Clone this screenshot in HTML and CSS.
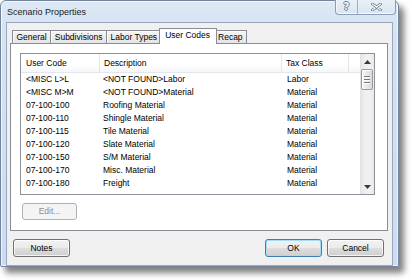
FILE: index.html
```html
<!DOCTYPE html>
<html lang="en">
<head>
<meta charset="utf-8">
<title>Scenario Properties</title>
<link rel="stylesheet" href="styles.css">
</head>
<body>
<div class="window">
  <div class="titlebar">
    <span class="title">Scenario Properties</span>
    <div class="caption-buttons">
      <div class="cap-btn help"><span class="help-glyph">?</span></div>
      <div class="cap-btn close">
        <svg width="11" height="8" viewBox="0 0 11 8">
          <path d="M1.5 1 L9.5 7 M9.5 1 L1.5 7" stroke="#6d7c90" stroke-width="2.8" stroke-linecap="round" fill="none"/>
          <path d="M1.5 1 L9.5 7 M9.5 1 L1.5 7" stroke="#f7f9fc" stroke-width="1.2" stroke-linecap="round" fill="none"/>
        </svg>
      </div>
    </div>
  </div>
  <div class="client">
    <div class="tabs-area">
      <div class="tabstrip">
        <div class="tab">General</div>
        <div class="tab">Subdivisions</div>
        <div class="tab">Labor Types</div>
        <div class="tab active">User Codes</div>
        <div class="tab">Recap</div>
      </div>
      <div class="panel">
        <div class="listview">
          <div class="lv-main">
            <div class="lv-header">
              <div class="hcell c1">User Code</div>
              <div class="hcell c2">Description</div>
              <div class="hcell c3">Tax Class</div>
              <div class="hcell c4"></div>
            </div>
            <div class="lv-rows">
              <div class="row"><span class="c1">&lt;MISC L&gt;L</span><span class="c2">&lt;NOT FOUND&gt;Labor</span><span class="c3">Labor</span></div>
              <div class="row"><span class="c1">&lt;MISC M&gt;M</span><span class="c2">&lt;NOT FOUND&gt;Material</span><span class="c3">Material</span></div>
              <div class="row"><span class="c1">07-100-100</span><span class="c2">Roofing Material</span><span class="c3">Material</span></div>
              <div class="row"><span class="c1">07-100-110</span><span class="c2">Shingle Material</span><span class="c3">Material</span></div>
              <div class="row"><span class="c1">07-100-115</span><span class="c2">Tile Material</span><span class="c3">Material</span></div>
              <div class="row"><span class="c1">07-100-120</span><span class="c2">Slate Material</span><span class="c3">Material</span></div>
              <div class="row"><span class="c1">07-100-150</span><span class="c2">S/M Material</span><span class="c3">Material</span></div>
              <div class="row"><span class="c1">07-100-170</span><span class="c2">Misc. Material</span><span class="c3">Material</span></div>
              <div class="row"><span class="c1">07-100-180</span><span class="c2">Freight</span><span class="c3">Material</span></div>
            </div>
          </div>
          <div class="vscroll">
            <div class="sb-arrow">
              <svg width="7" height="4" viewBox="0 0 7 4"><path d="M0 4 L3.5 0 L7 4 Z" fill="#3a3a3a"/></svg>
            </div>
            <div class="sb-thumb"><i></i><i></i><i></i></div>
            <div class="sb-track"></div>
            <div class="sb-arrow">
              <svg width="7" height="4" viewBox="0 0 7 4"><path d="M0 0 L7 0 L3.5 4 Z" fill="#3a3a3a"/></svg>
            </div>
          </div>
        </div>
        <button class="btn edit" disabled>Edit...</button>
      </div>
    </div>
    <div class="footer">
      <button class="btn">Notes</button>
      <div class="spacer"></div>
      <button class="btn default">OK</button>
      <button class="btn">Cancel</button>
    </div>
  </div>
</div>
</body>
</html>
```

FILE: styles.css
```css
* { box-sizing: border-box; }

html, body {
  margin: 0;
  padding: 0;
}

body {
  width: 412px;
  height: 280px;
  overflow: hidden;
  background: #ffffff;
  font-family: "Liberation Sans", Arial, sans-serif;
  font-size: 8.5px;
  color: #000;
}

/* ---------- window frame ---------- */
.window {
  width: 399px;
  height: 267px;
  border: 1px solid #74859b;
  border-radius: 6px 6px 2px 2px;
  background: linear-gradient(180deg, #dfe9f5 0, #d6e4f3 20px, #c9dcf1 100%);
  box-shadow: 5px 6px 6px rgba(0, 0, 0, 0.5), inset 0 0 0 1px rgba(255, 255, 255, 0.65);
  display: flex;
  flex-direction: column;
}

.titlebar {
  height: 21px;
  display: flex;
  justify-content: space-between;
  align-items: flex-start;
}

.title {
  padding: 6px 0 0 6px;
  font-size: 9px;
  line-height: 11px;
  color: #1a1a1a;
}

.caption-buttons {
  display: flex;
  margin-top: -1px;
  margin-right: 2px;
  height: 15px;
  border: 1px solid #8b9db4;
  border-top: none;
  border-radius: 0 0 4px 4px;
  background: linear-gradient(180deg, #e9f0f8, #d9e5f2);
  box-shadow: inset 0 -1px 0 rgba(255, 255, 255, 0.8), inset 1px 0 0 rgba(255, 255, 255, 0.6);
  overflow: hidden;
}

.cap-btn {
  display: flex;
  align-items: center;
  justify-content: center;
}

.cap-btn.help {
  width: 22px;
  border-right: 1px solid #9fb0c5;
}

.cap-btn.close {
  width: 37px;
}

.help-glyph {
  font-family: "DejaVu Sans", sans-serif;
  font-weight: bold;
  font-size: 10px;
  line-height: 10px;
  color: #f4f7fb;
  text-shadow: 1px 0 0 #6f7e92, -1px 0 0 #6f7e92, 0 1px 0 #6f7e92, 0 -1px 0 #6f7e92;
}

/* ---------- client area ---------- */
.client {
  flex: 1;
  margin: 0 5px;
  border: 1px solid #9aa8b9;
  background: #f0f0f0;
  display: flex;
  flex-direction: column;
}

.tabs-area {
  margin: 0 4px 0 3px;
}

.tabstrip {
  height: 20px;
  display: flex;
  align-items: flex-end;
  padding-left: 2px;
}

.tab {
  height: 13px;
  padding: 0 3.5px;
  margin-left: -1px;
  border: 1px solid #898c95;
  border-bottom: none;
  background: linear-gradient(180deg, #f4f4f4, #e4e4e4);
  box-shadow: inset 1px 1px 0 #fbfbfb;
  line-height: 12px;
  white-space: nowrap;
}

.tab:first-child {
  margin-left: 0;
}

.tab.active {
  position: relative;
  z-index: 1;
  height: 16px;
  margin: 0 -2px -1px -3px;
  padding: 0 5.5px 2px;
  background: #ffffff;
  box-shadow: none;
  line-height: 12px;
}

.panel {
  height: 188px;
  border: 1px solid #898c95;
  background: #ffffff;
  padding: 9px 0 0 9px;
}

/* ---------- list view ---------- */
.listview {
  width: 355px;
  height: 142px;
  border: 1px solid #8e9199;
  background: #ffffff;
  display: flex;
}

.lv-main {
  flex: 1;
  display: flex;
  flex-direction: column;
}

.lv-header {
  height: 19px;
  display: grid;
  grid-template-columns: 79px 182px 67px 1fr;
  border-bottom: 1px solid #e3e6ea;
  background: linear-gradient(180deg, #ffffff 0, #ffffff 55%, #f6f7f9 100%);
}

.hcell {
  line-height: 18px;
  border-right: 1px solid #e5e5e5;
  white-space: nowrap;
  overflow: hidden;
}

.hcell.c4 {
  border-right: none;
}

.lv-header .c1 { padding-left: 5px; }
.lv-header .c2 { padding-left: 4px; }
.lv-header .c3 { padding-left: 4px; }

.row {
  height: 13px;
  display: grid;
  grid-template-columns: 79px 182px 67px;
  line-height: 13px;
  white-space: nowrap;
}

.row .c1 { padding-left: 5px; }
.row .c2 { padding-left: 3px; }
.row .c3 { padding-left: 5px; }

/* ---------- scrollbar ---------- */
.vscroll {
  width: 14px;
  display: flex;
  flex-direction: column;
  background: linear-gradient(90deg, #e2e2e2 0, #eeeeee 30%, #f1f1f1 70%, #e8e8e8 100%);
}

.sb-arrow {
  height: 15px;
  display: flex;
  align-items: center;
  justify-content: center;
}

.sb-thumb {
  height: 21px;
  margin: 0 1px;
  border: 1px solid #9b9b9b;
  border-radius: 2px;
  background: linear-gradient(90deg, #f6f6f6 0, #e9e9e9 50%, #d8d8d8 100%);
  box-shadow: inset 1px 1px 0 #ffffff;
  display: flex;
  flex-direction: column;
  align-items: center;
  justify-content: center;
  gap: 2px;
}

.sb-thumb i {
  display: block;
  width: 6px;
  height: 1px;
  background: #7a7a7a;
  box-shadow: 0 1px 0 #ffffff;
}

.sb-track {
  flex: 1;
}

/* ---------- buttons ---------- */
.btn {
  width: 57px;
  height: 18px;
  margin: 0;
  padding: 0;
  font-family: inherit;
  font-size: 8.5px;
  color: #000;
  border: 1px solid #707070;
  border-radius: 3px;
  background: linear-gradient(180deg, #f2f2f2 0, #ebebeb 48%, #dddddd 52%, #cfcfcf 100%);
  box-shadow: inset 0 0 0 1px rgba(255, 255, 255, 0.75);
  text-align: center;
  line-height: 16px;
}

.btn.edit {
  display: block;
  width: 55px;
  height: 17px;
  margin: 8px 0 0 2px;
  border-color: #adb2b5;
  background: #f4f4f4;
  box-shadow: none;
  color: #8d8d8d;
  line-height: 15px;
}

.btn.default {
  border-color: #3c7fb1;
  box-shadow: inset 0 0 0 1px #a8dcf5;
}

.footer {
  display: flex;
  padding: 8px 8px 0 6px;
  gap: 5px;
}

.spacer {
  flex: 1;
}
```
